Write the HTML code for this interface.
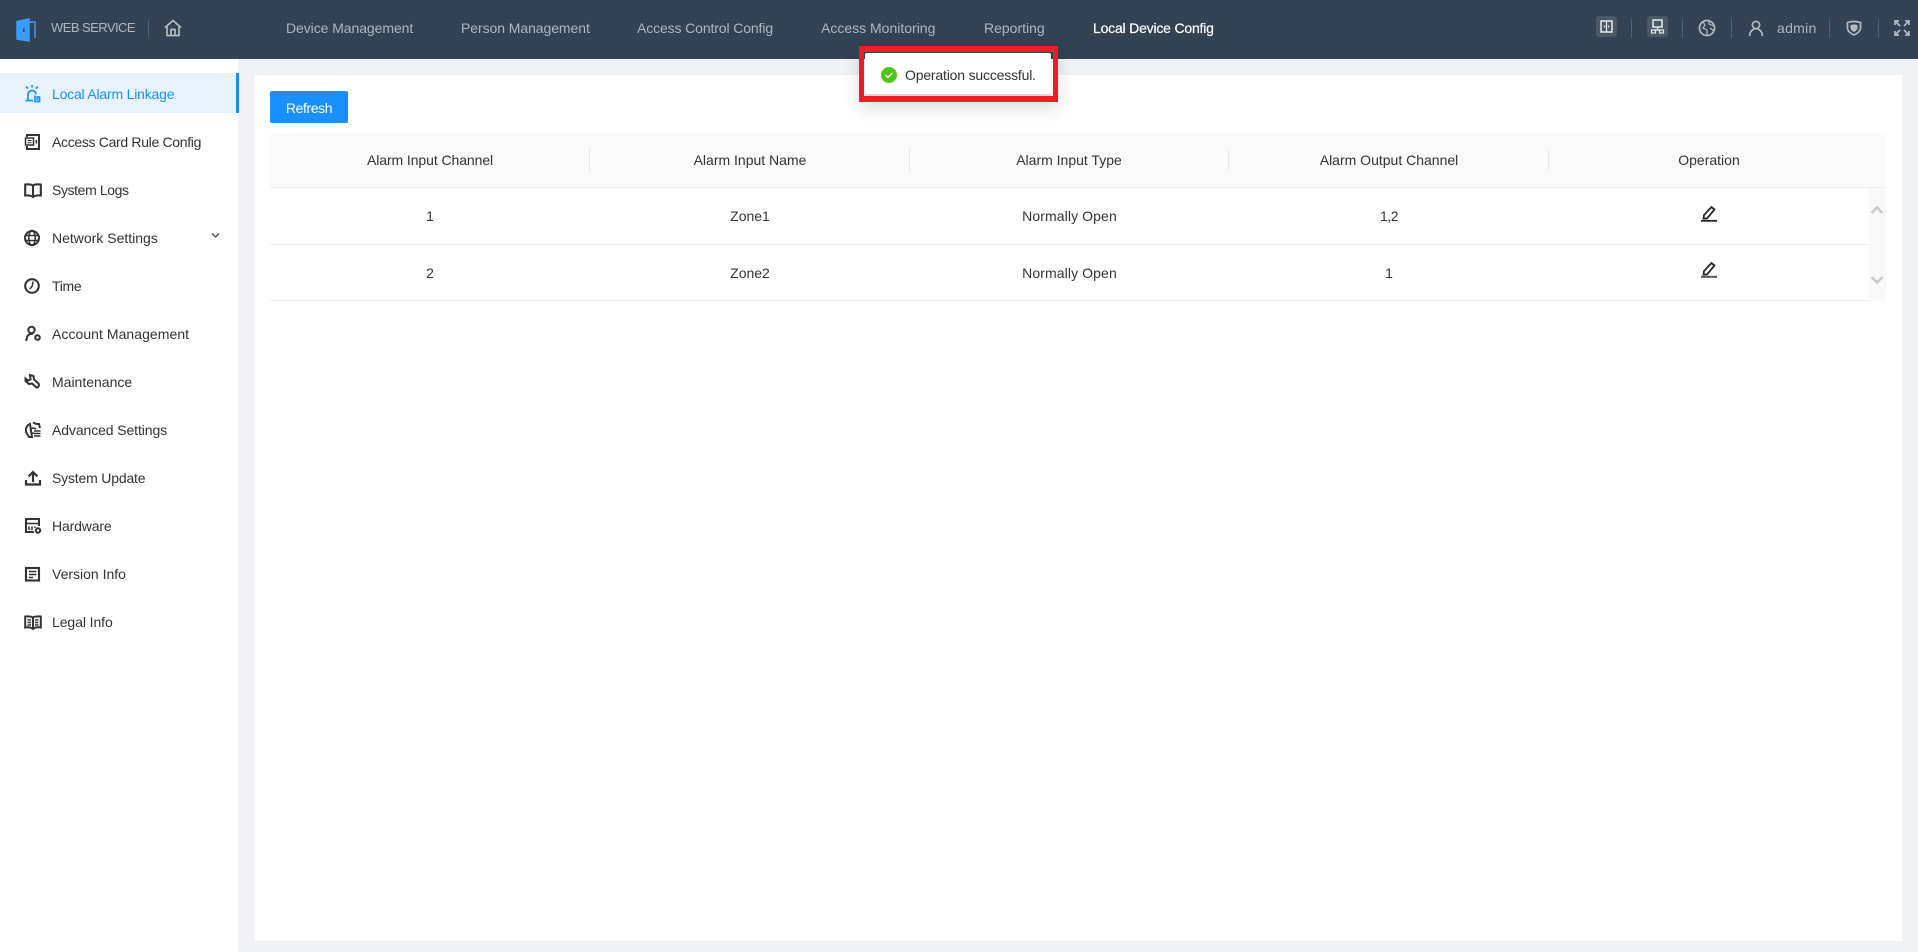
<!DOCTYPE html>
<html><head><meta charset="utf-8"><title>Web Service</title>
<style>
html,body{margin:0;padding:0;width:1918px;height:952px;overflow:hidden;background:#f0f2f5;font-family:"Liberation Sans",sans-serif;font-size:14px;color:#333}
div,span,svg{position:absolute}
.t{white-space:nowrap;line-height:20px}
.c{transform:translateX(-50%)}
.n{color:#aeb5bc;top:18px;font-size:14px}
.v{width:1px;height:19px;top:19px;background:#56636f}
.m{left:52px;color:#333}
.th{top:150px}
.td1{top:206px}
.td2{top:263px}
.i{fill:none;stroke:#333;stroke-width:1.8}
.h{fill:none;stroke:#b4bac1;stroke-width:1.7}
.sep{position:absolute;width:1px;height:22px;top:149px;background:#e8e8e8}
</style></head><body>
<div style="left:0;top:0;width:1918px;height:59px;background:#334354"></div>
<svg style="left:14px;top:16px" width="26" height="28" viewBox="0 0 26 28"><path d="M3 5.500 L15 3 V25 L3 23 Z" fill="#3a9bff" stroke="#3a9bff" stroke-linejoin="round" stroke-width="1.500"/><path d="M15 6H21V22" fill="none" stroke="#3a9bff" stroke-width="1.500"/><rect x="9" y="12.500" width="1.600" height="3.500" fill="#28465f"/></svg>
<span class="t" style="left:51px;top:18px;color:#aeb5bc;font-size:13px;letter-spacing:-.55px">WEB SERVICE</span>
<div class="v" style="left:148px;top:20px;height:17px"></div>
<svg style="left:164px;top:19px" width="18" height="18" viewBox="0 0 18 18"><path class="h" d="M1 8.500L9 1.500L17 8.500M3 7V16.500H15V7M7 16.500V10.500H11V16.500"/></svg>
<span class="t n" style="left:286px;letter-spacing:-.07px">Device Management</span>
<span class="t n" style="left:461px;letter-spacing:-.07px">Person Management</span>
<span class="t n" style="left:637px;letter-spacing:-.12px">Access Control Config</span>
<span class="t n" style="left:821px">Access Monitoring</span>
<span class="t n" style="left:984px">Reporting</span>
<span class="t n" style="left:1093px;color:#fff;-webkit-text-stroke:.2px #fff;letter-spacing:-.2px">Local Device Config</span>

<div style="left:1596px;top:16px;width:21px;height:21px;border-radius:3px;background:#4a5968"></div>
<svg style="left:1597px;top:17px" width="19" height="19" viewBox="0 0 19 19"><rect x="4" y="4" width="11" height="11" fill="none" stroke="#e8ebee" stroke-width="1.500"/><path d="M9.500 4V15" stroke="#e8ebee" stroke-width="1.200"/><path d="M7.500 8.500v2M11.500 8.500v2" stroke="#e8ebee" stroke-width="1.200"/></svg>
<div class="v" style="left:1631px"></div>
<div style="left:1647px;top:16px;width:21px;height:21px;border-radius:3px;background:#4a5968"></div>
<svg style="left:1648px;top:17px" width="19" height="19" viewBox="0 0 19 19"><rect x="5" y="3" width="9" height="7" fill="none" stroke="#e8ebee" stroke-width="1.500"/><path d="M9.500 10V13M5.500 13H13.500" stroke="#e8ebee" stroke-width="1.200" fill="none"/><rect x="3.500" y="13" width="4" height="3" fill="none" stroke="#e8ebee" stroke-width="1.200"/><rect x="11.500" y="13" width="4" height="3" fill="none" stroke="#e8ebee" stroke-width="1.200"/></svg>
<div class="v" style="left:1682px"></div>
<svg style="left:1698px;top:19px" width="18" height="18" viewBox="0 0 18 18"><circle class="h" cx="9" cy="9" r="7.500"/><path class="h" style="stroke-width:1.200" d="M5 3L7 6L5 9L9 11L9 16M11 2L11 5L16 7M12 9L16 12"/></svg>
<div class="v" style="left:1731px"></div>
<svg style="left:1747px;top:20px" width="18" height="17" viewBox="0 0 18 17"><circle class="h" cx="9" cy="5" r="3.600"/><path class="h" d="M2.500 16C3 12 5 9 9 8.700C13 9 15 12 15.500 16"/></svg>
<span class="t" style="left:1777px;top:18px;color:#aeb5bc;letter-spacing:.3px">admin</span>
<div class="v" style="left:1829px"></div>
<svg style="left:1846px;top:20px" width="16" height="16" viewBox="0 0 16 16"><path class="h" d="M1.500 2.500Q8 0.500 14.500 2.500V9Q13 13 8 15Q3 13 1.500 9Z"/><path d="M4.500 5Q8 4 11.500 5V8.500Q10.500 11 8 12Q5.500 11 4.500 8.500Z" fill="#b4bac1"/></svg>
<div class="v" style="left:1878px"></div>
<svg style="left:1894px;top:20px" width="16" height="16" viewBox="0 0 16 16"><path class="h" d="M2 2L6 6M14 2L10 6M2 14L6 10M14 14L10 10M1 5V1H5M11 1H15V5M1 11V15H5M11 15H15V11"/></svg>

<div style="left:0;top:59px;width:238px;height:893px;background:#fff"></div>
<div style="left:0;top:73px;width:236px;height:40px;background:#e8f3fe"></div>
<div style="left:236px;top:73px;width:3px;height:40px;background:#1890ff"></div>

<svg style="left:24px;top:84px" width="18" height="19" viewBox="0 0 18 19"><path fill="none" stroke="#1890ff" stroke-width="1.700" d="M1.500 16.500H9M4 16.500V11C4 8 6 6.500 8 6.500C10 6.500 12 8 12 10.500M8 1V3.500M2 2.500L4 4.500M14 2.500L12 4.500M11 11.500V17.500H15.500V13H13.300V16"/></svg>
<span class="t m" style="top:84px;color:#1890ff;letter-spacing:-.2px">Local Alarm Linkage</span>
<svg style="left:24px;top:133px" width="18" height="18" viewBox="0 0 18 18"><path class="i" style="stroke-width:2" d="M3 4V2H15V16H3V13"/><rect x="1.500" y="5" width="8" height="7" fill="none" stroke="#333" stroke-width="1.500"/><path d="M3.500 7.500H7.500M3.500 9.800H7.500" stroke="#333"/><rect x="11.500" y="7" width="1.600" height="3.500" fill="#333"/></svg>
<span class="t m" style="top:132px;letter-spacing:-.32px">Access Card Rule Config</span>
<svg style="left:24px;top:182px" width="18" height="18" viewBox="0 0 18 18"><path class="i" style="stroke-width:2.100" d="M9 3.500C7 2.200 4 2.200 1.200 2.500V13.500C4 13.200 7 13.500 9 15C11 13.500 14 13.200 16.800 13.500V2.500C14 2.200 11 2.200 9 3.500ZM9 3.500V15"/></svg>
<span class="t m" style="top:180px;letter-spacing:-.39px">System Logs</span>
<svg style="left:24px;top:229px" width="18" height="18" viewBox="0 0 18 18"><circle class="i" style="stroke-width:2" cx="8" cy="9" r="7"/><ellipse class="i" cx="8" cy="9" rx="3.200" ry="7.500" style="stroke-width:1.500"/><path class="i" style="stroke-width:1.500" d="M1 6.500H15M1 11.500H15"/></svg>
<span class="t m" style="top:228px">Network Settings</span>
<svg style="left:211px;top:232px" width="9" height="7" viewBox="0 0 9 7"><path d="M1 1.500L4.500 5L8 1.500" fill="none" stroke="#444" stroke-width="1.300"/></svg>
<svg style="left:24px;top:277px" width="18" height="18" viewBox="0 0 18 18"><circle class="i" style="stroke-width:2.100" cx="8" cy="9" r="6.800"/><path class="i" style="stroke-width:1.500" d="M9 4.500L8.300 9L5.800 12"/></svg>
<span class="t m" style="top:276px;letter-spacing:-.3px">Time</span>
<svg style="left:24px;top:325px" width="18" height="18" viewBox="0 0 18 18"><circle class="i" style="stroke-width:2" cx="7.500" cy="5" r="3.200"/><path class="i" style="stroke-width:2" d="M2 16L3.500 11C4.500 9.200 7 8.500 9 9"/><circle class="i" style="stroke-width:2" cx="13.500" cy="12.500" r="2.300"/></svg>
<span class="t m" style="top:324px;letter-spacing:.05px">Account Management</span>
<svg style="left:24px;top:373px" width="18" height="18" viewBox="0 0 18 18"><path class="i" style="stroke-width:2" d="M6 2L9.500 3L10 6.500L14.500 10.500C15.500 12.500 14.500 14.500 12.500 14.500L8 10.500L5 11L1.500 8V5.500L4 7.500L6.500 6.500Z"/></svg>
<span class="t m" style="top:372px">Maintenance</span>
<svg style="left:24px;top:421px" width="18" height="18" viewBox="0 0 18 18"><path class="i" style="stroke-width:2" d="M9 1.500L12.500 3H15L16 7M8 16H5L3.500 13.500L2 11V7.500L3.500 4.500L6 3Z"/><path class="i" style="stroke-width:1.500" d="M12 8.500C11 6.500 7 6.500 6.500 9.500C6.500 11.500 8 12.500 10 12M10 10H16.500M10 12.500H16.500M10 15H16.500"/></svg>
<span class="t m" style="top:420px;letter-spacing:-.1px">Advanced Settings</span>
<svg style="left:24px;top:469px" width="18" height="18" viewBox="0 0 18 18"><path class="i" style="stroke-width:2.200" d="M2 11V15.500H16V11M9 13V4M4.500 7.500L9 3L13.500 7.500"/></svg>
<span class="t m" style="top:468px;letter-spacing:-.18px">System Update</span>
<svg style="left:24px;top:517px" width="18" height="18" viewBox="0 0 18 18"><path class="i" style="stroke-width:2" d="M10 15H2V2H15V9"/><path class="i" style="stroke-width:1.600" d="M2 6.500H15.500M5 9.500V13M8 9.500V13M11 9.500V11"/><circle class="i" cx="14" cy="13.500" r="2.200" style="stroke-width:2"/></svg>
<span class="t m" style="top:516px;letter-spacing:-.15px">Hardware</span>
<svg style="left:24px;top:565px" width="18" height="18" viewBox="0 0 18 18"><rect class="i" style="stroke-width:2.100" x="2" y="3" width="13" height="12.500"/><path class="i" style="stroke-width:1.500" d="M5 6.500H12.500M5 9.500H12.500M5 12.500H9"/></svg>
<span class="t m" style="top:564px">Version Info</span>
<svg style="left:24px;top:613px" width="18" height="18" viewBox="0 0 18 18"><path class="i" style="stroke-width:2" d="M9 4.500C7 3.200 4 3.200 1.200 3.500V14.500C4 14 7 14.500 9 16C11 14.500 14 14 16.800 14.500V3.500C14 3.200 11 3.200 9 4.500ZM9 4.500V16"/><path class="i" style="stroke-width:1.500" d="M3.500 7H7M3.500 9.500H7M3.500 12H7M11 7H14.500M11 9.500H14.500M11 12H14.500"/></svg>
<span class="t m" style="top:612px;letter-spacing:-.08px">Legal Info</span>

<div style="left:254px;top:75px;width:1648px;height:866px;background:#fff"></div>
<div style="left:270px;top:91px;width:78px;height:32px;background:#1890ff;border-radius:2px"></div>
<span class="t c" style="left:309px;top:98px;color:#fff;letter-spacing:-.4px">Refresh</span>

<div style="left:270px;top:133px;width:1616px;height:54px;background:#fafafa;border-bottom:1px solid #eee"></div>
<div class="sep" style="left:589px"></div><div class="sep" style="left:909px"></div><div class="sep" style="left:1228px"></div><div class="sep" style="left:1548px"></div>
<span class="t c th" style="left:430px;letter-spacing:-.08px">Alarm Input Channel</span>
<span class="t c th" style="left:750px">Alarm Input Name</span>
<span class="t c th" style="left:1069px">Alarm Input Type</span>
<span class="t c th" style="left:1389px">Alarm Output Channel</span>
<span class="t c th" style="left:1709px">Operation</span>

<div style="left:270px;top:244px;width:1599px;height:1px;background:#eee"></div>
<div style="left:270px;top:300px;width:1599px;height:1px;background:#eee"></div>
<div style="left:1869px;top:188px;width:17px;height:113px;background:#f9f9f9"></div>
<svg style="left:1871px;top:205px" width="12" height="10" viewBox="0 0 12 10"><path d="M.5 8L6 2.500L11.500 8" fill="none" stroke="#c9c9c9" stroke-width="2.500"/></svg>
<svg style="left:1871px;top:275px" width="12" height="10" viewBox="0 0 12 10"><path d="M.5 2L6 7.500L11.500 2" fill="none" stroke="#c9c9c9" stroke-width="2.500"/></svg>

<span class="t c td1" style="left:430px">1</span>
<span class="t c td1" style="left:750px">Zone1</span>
<span class="t c td1" style="left:1069.500px;letter-spacing:.1px">Normally Open</span>
<span class="t c td1" style="left:1389px;letter-spacing:-.5px">1,2</span>
<span class="t c td2" style="left:430px">2</span>
<span class="t c td2" style="left:750px">Zone2</span>
<span class="t c td2" style="left:1069.500px;letter-spacing:.1px">Normally Open</span>
<span class="t c td2" style="left:1389px">1</span>
<svg style="left:1700px;top:205px" width="18" height="18" viewBox="0 0 18 18"><path fill="none" stroke="#262626" stroke-width="1.800" d="M3.500 13.500L4 10L11.500 2L14.500 4.500L7 13.500Z"/><path d="M1 15.800H17" stroke="#262626" stroke-width="1.800"/></svg>
<svg style="left:1700px;top:261px" width="18" height="18" viewBox="0 0 18 18"><path fill="none" stroke="#262626" stroke-width="1.800" d="M3.500 13.500L4 10L11.500 2L14.500 4.500L7 13.500Z"/><path d="M1 15.800H17" stroke="#555" stroke-width="2"/></svg>

<div style="left:859px;top:46px;width:199px;height:56px;box-shadow:0 6px 16px rgba(0,0,0,.14)"></div>
<div style="left:864px;top:52px;width:189px;height:44px;background:#334354"></div>
<div style="left:864px;top:59px;width:189px;height:37px;background:#f0f2f5"></div>
<div style="left:865px;top:53px;width:186px;height:41px;background:#fff;border-radius:2px;box-shadow:0 2px 0 #d6d8db"></div>
<div style="left:859px;top:46px;width:189px;height:44px;border:5px solid #ee1c25;border-top-width:6px;border-bottom-width:6px"></div>
<svg style="left:880px;top:66px" width="18" height="18" viewBox="0 0 18 18"><circle cx="9" cy="9" r="8" fill="#52c41a"/><path d="M5.500 9.200L8 11.500L12.500 6.800" fill="none" stroke="#fff" stroke-width="1.300"/></svg>
<span class="t" style="left:905px;top:65px;color:#333;letter-spacing:-.18px">Operation successful.</span>
</body></html>
